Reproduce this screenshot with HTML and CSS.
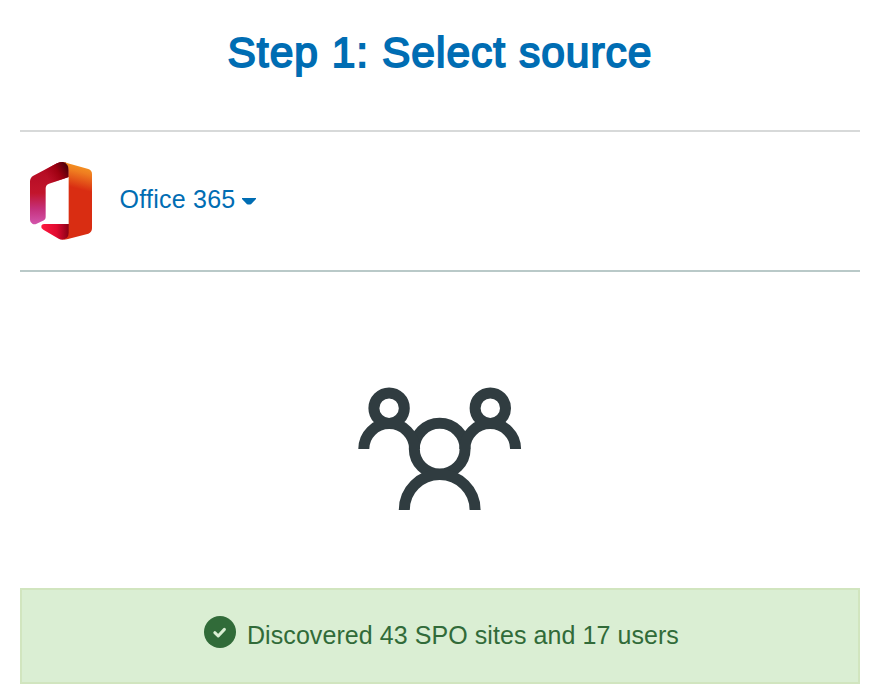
FILE: index.html
```html
<!DOCTYPE html>
<html lang="en">
<head>
<meta charset="utf-8">
<title>Select source</title>
<link rel="stylesheet" href="styles.css">
</head>
<body>
<main class="wizard">
  <h1 class="title">Step 1: Select source</h1>
  <section class="source">
    <svg class="logo" viewBox="0 0 228 270" aria-hidden="true">
      <defs>
        <linearGradient id="slab" x1="0.55" y1="0" x2="0.45" y2="1">
          <stop offset="0" stop-color="#f59a22"/><stop offset=".12" stop-color="#ef7d20"/><stop offset=".34" stop-color="#d92d12"/><stop offset="1" stop-color="#d92d12"/>
        </linearGradient>
        <linearGradient id="side" x1="0" y1="0" x2="0" y2="1">
          <stop offset="0" stop-color="#b00820"/><stop offset=".5" stop-color="#c2152c"/><stop offset=".75" stop-color="#c5307a"/><stop offset="1" stop-color="#d355ac"/>
        </linearGradient>
        <linearGradient id="fold" gradientUnits="userSpaceOnUse" x1="70" y1="65" x2="134" y2="28">
          <stop offset="0" stop-color="#a60014" stop-opacity="0"/><stop offset=".5" stop-color="#9c0010"/><stop offset="1" stop-color="#420009"/>
        </linearGradient>
        <linearGradient id="base" x1="0" y1="0" x2="1" y2="0">
          <stop offset="0" stop-color="#ff1a3f"/><stop offset=".55" stop-color="#e00a30"/><stop offset="1" stop-color="#850014"/>
        </linearGradient>
      </defs>
      <path fill="url(#side)" d="M18 76Q18 65 28 59L99 22Q114 15 126 20L134 28V63L75 83Q65 87 65 97V184Q65 190 60 193L38 203Q32 206 26 204Q18 200 18 192Z"/>
      <path fill="url(#fold)" d="M18 76Q18 65 28 59L99 22Q114 15 126 20L134 28V63L75 83Q65 87 65 97V105H18Z"/>
      <path fill="url(#base)" d="M60 204H136V246L115 251Q109 251 104 248L58 221Q50 216 52 209Q54 204 60 204Z"/>
      <path fill="url(#slab)" d="M118 19Q122 18 126 20L193 39Q204 43 204 54V217Q204 229 193 233L129 250Q121 252 113 251Q134 249 134 230V42Q134 24 118 19Z"/>
    </svg>
    <button class="picker" type="button">Office 365<svg class="caret" viewBox="0 0 14 7" aria-hidden="true"><path d="M0 0H14V1L9 6.2Q7 7 5 6.2L0 1Z"/></svg></button>
  </section>
  <section class="status">
    <svg class="people" viewBox="0 0 164 124" aria-hidden="true">
      <g fill="none" stroke="#303c40" stroke-width="11">
        <circle cx="31.1" cy="21.2" r="15.2"/>
        <circle cx="132.3" cy="21.2" r="15.2"/>
        <circle cx="81.7" cy="61.7" r="25.4"/>
        <path d="M5.8 62a25.4 25.4 0 0 1 50.8 0M106.8 62a25.4 25.4 0 0 1 50.8 0M46.3 123a35.4 35.4 0 0 1 70.8 0"/>
      </g>
    </svg>
  </section>
  <div class="alert">
    <svg class="check" viewBox="0 0 32 32" aria-hidden="true">
      <circle cx="16" cy="16" r="16" fill="#316b39"/>
      <path d="M10.8 16.7l3.4 3.3 6.2-6.6" fill="none" stroke="#daeed3" stroke-width="3" stroke-linecap="round" stroke-linejoin="round"/>
    </svg>
    <span class="message">Discovered 43 SPO sites and 17 users</span>
  </div>
</main>
</body>
</html>
```
FILE: styles.css
```css
* { box-sizing: border-box; }
body {
  margin: 0;
  background: #fff;
  font-family: "Liberation Sans", Arial, sans-serif;
}
.wizard {
  width: 840px;
  margin-left: 20px;
}
.title {
  height: 130px;
  margin: 0;
  padding-top: 28px;
  font-size: 42.5px;
  font-weight: 400;
  line-height: 50px;
  letter-spacing: 1px;
  text-align: center;
  white-space: nowrap;
  color: #006db3;
  -webkit-text-stroke: 1.8px #006db3;
}
.source {
  display: flex;
  align-items: center;
  height: 142px;
  padding-left: 4px;
  border-top: 2px solid #d7d9d9;
  border-bottom: 2px solid #b9c9c8;
}
.logo {
  width: 76px;
  height: 90px;
}
.picker {
  display: flex;
  align-items: center;
  margin: 0 0 4px 19.5px;
  padding: 0;
  border: 0;
  background: none;
  font: 25px/30px "Liberation Sans", Arial, sans-serif;
  letter-spacing: 0.25px;
  color: #006db3;
}
.caret {
  width: 14px;
  height: 7px;
  margin: 4px 0 0 6px;
  fill: currentColor;
}
.status {
  display: flex;
  justify-content: center;
  height: 316px;
  padding-top: 115px;
}
.people {
  width: 164px;
  height: 124px;
}
.alert {
  display: flex;
  align-items: center;
  height: 96px;
  padding-left: 182px;
  border: 2px solid #d1e5bf;
  background: #daeed3;
  color: #316b39;
}
.check {
  width: 32px;
  height: 32px;
  margin-bottom: 8px;
}
.message {
  margin: 0 0 2px 11px;
  font-size: 25px;
  line-height: 30px;
  letter-spacing: 0.07px;
  white-space: nowrap;
}
```
